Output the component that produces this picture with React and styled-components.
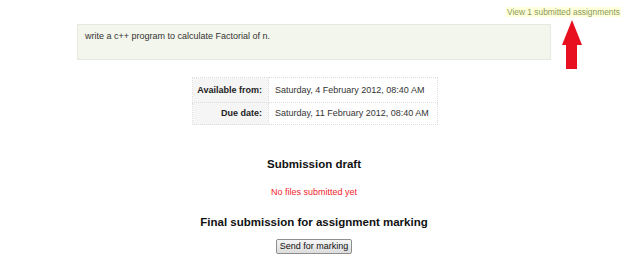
import React from "react";
import styled, { createGlobalStyle } from "styled-components";

const Global = createGlobalStyle`
  html, body { margin: 0; padding: 0; background: #fff; }
  body { font-family: "Liberation Sans", Arial, sans-serif; color: #222; }
`;

const Page = styled.div`
  position: relative;
  width: 624px;
  height: 271px;
  overflow: hidden;
`;

const TopBar = styled.div`
  display: flex;
  justify-content: flex-end;
  align-items: center;
  height: 24px;
  padding-right: 3px;
  box-sizing: border-box;
`;

const SubmittedLink = styled.a`
  font-size: 8.4px;
  line-height: 10px;
  color: #8b9a55;
  background: #ffffdc;
  padding: 0 1px;
  margin-top: -1px;
  text-decoration: none;
`;

const Column = styled.div`
  width: 474px;
  margin-left: 77px;
  display: flex;
  flex-direction: column;
  align-items: center;
`;

const Description = styled.div`
  align-self: stretch;
  height: 36px;
  box-sizing: border-box;
  background: #f3f6ec;
  border: 1px solid #e6e9df;
  padding: 6px 7px 0;
  font-size: 9px;
  line-height: 11px;
  color: #333;
`;

const Dates = styled.table`
  margin-top: 17px;
  margin-left: 2px;
  border-collapse: collapse;
  font-size: 9px;
  line-height: 11px;
`;

const Row = styled.tr`
  height: ${(p) => p.$h}px;
`;

const Label = styled.th`
  width: 75px;
  box-sizing: border-box;
  text-align: right;
  font-weight: bold;
  color: #222;
  background: #f5f5f5;
  border: 1px dotted #dcdcdc;
  padding: 0 6px 0 4px;
  white-space: nowrap;
`;

const Value = styled.td`
  width: 166px;
  box-sizing: border-box;
  text-align: left;
  color: #333;
  background: #fff;
  border: 1px dotted #dcdcdc;
  padding: 0 8px 0 6px;
  white-space: nowrap;
`;

const Heading = styled.h3`
  margin: ${(p) => p.$mt}px 0 0;
  font-size: 11.5px;
  line-height: 14px;
  font-weight: bold;
  color: #111;
`;

const Notice = styled.div`
  margin-top: 16px;
  font-size: 9px;
  line-height: 11px;
  color: #f2242c;
`;

const Button = styled.button`
  margin-top: 10px;
  height: 15px;
  padding: 0 3px;
  font-family: "Liberation Sans", Arial, sans-serif;
  font-size: 9px;
  line-height: 11px;
  white-space: nowrap;
  color: #111;
  background: linear-gradient(#f6f6f6, #dcdcdc);
  border: 1px solid #8e8e8e;
  border-radius: 2px;
`;

const Arrow = styled.svg`
  position: absolute;
  left: 560px;
  top: 19px;
`;

export default function App() {
  return (
    <Page>
      <Global />
      <TopBar>
        <SubmittedLink href="#">View 1 submitted assignments</SubmittedLink>
      </TopBar>
      <Column>
        <Description>write a c++ program to calculate Factorial of n.</Description>
        <Dates>
          <tbody>
            <Row $h={25}>
              <Label>Available from:</Label>
              <Value>Saturday, 4 February 2012, 08:40 AM</Value>
            </Row>
            <Row $h={22}>
              <Label>Due date:</Label>
              <Value>Saturday, 11 February 2012, 08:40 AM</Value>
            </Row>
          </tbody>
        </Dates>
        <Heading $mt={32}>Submission draft</Heading>
        <Notice>No files submitted yet</Notice>
        <Heading $mt={17}>Final submission for assignment marking</Heading>
        <Button>Send for marking</Button>
      </Column>
      <Arrow width="24" height="52" viewBox="0 0 24 52">
        <polygon points="12,1 22,26 17,26 17,50 6,50 6,26 2,26" fill="#e8101e" />
      </Arrow>
    </Page>
  );
}
